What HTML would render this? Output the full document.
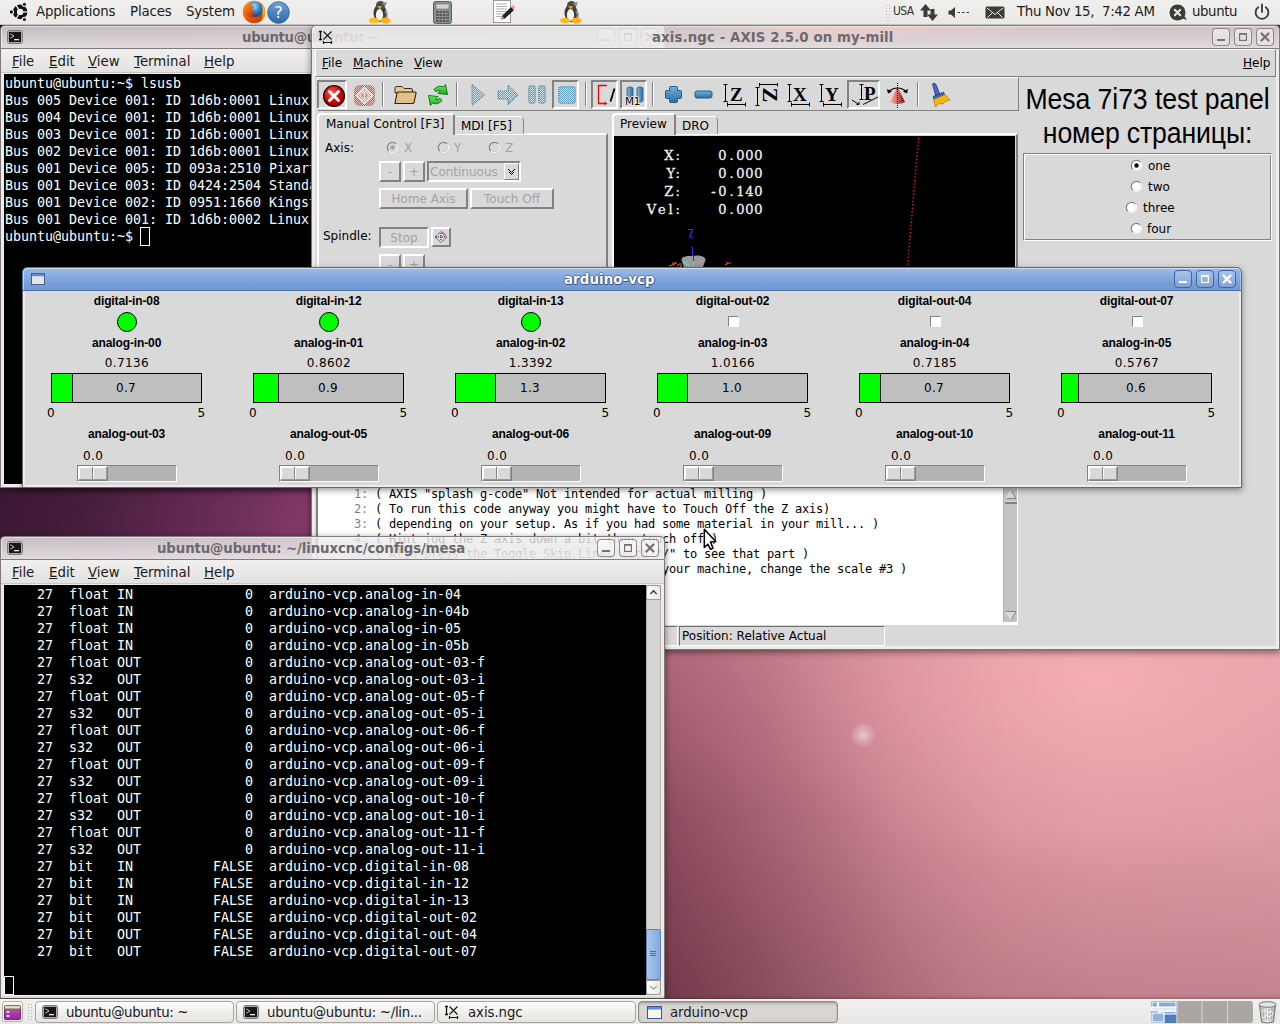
<!DOCTYPE html>
<html lang="en">
<head>
<meta charset="utf-8">
<title>arduino-vcp desktop</title>
<style>
*{box-sizing:border-box;margin:0;padding:0}
html,body{width:1280px;height:1024px;overflow:hidden;background:#3c1a35}
body{position:relative;font-family:"DejaVu Sans","Liberation Sans",sans-serif;font-size:13.333px;color:#000;line-height:15px;-webkit-font-smoothing:antialiased}
.a{position:absolute}
.t{position:absolute;white-space:pre;line-height:15px;height:15px}
.ui{font-family:"DejaVu Sans","Liberation Sans",sans-serif;font-size:13.333px;color:#1a1a1a}
.tk{font-family:"DejaVu Sans","Liberation Sans",sans-serif;font-size:12px;line-height:14px;height:14px}
.hb{font-family:"Liberation Sans","DejaVu Sans",sans-serif;font-weight:bold;font-size:12px;line-height:14px;height:14px;text-align:center}
.mono{font-family:"DejaVu Sans Mono","Liberation Mono",monospace;font-size:13.333px;line-height:17px;height:17px;color:#fff;letter-spacing:-0.025px}
.gc{font-family:"DejaVu Sans Mono","Liberation Mono",monospace;font-size:12px;line-height:15px;height:15px;color:#000;letter-spacing:-0.225px}
.dro{font-family:"DejaVu Serif","Liberation Serif",serif;font-weight:normal;font-size:13px;line-height:18px;height:18px;color:#f2f2f2;-webkit-text-stroke:0.3px #f2f2f2}
.dis{color:#a3a3a3}
u{text-decoration:underline;text-underline-offset:1px;text-decoration-thickness:1px}
#desk{left:0;top:0;width:1280px;height:1024px;
 background:
  radial-gradient(ellipse 900px 700px at 1150px 620px, #e9a5ad 0%, #dd98a5 20%, #c27b93 42%, #9c5278 62%, rgba(130,60,100,0) 100%),
  linear-gradient(100deg, #2f1229 0%, #471d3e 12%, #7b3564 26%, #8a4068 40%, #9a4f72 55%, #a85c7c 100%);
}
#desk2{left:664px;top:640px;width:616px;height:360px;
 background:
  radial-gradient(ellipse 13px 13px at 199px 95px, rgba(255,236,236,.6), rgba(255,236,236,0) 100%),
  radial-gradient(ellipse 300px 260px at 0px 360px, rgba(50,12,25,.18) 0%, rgba(50,12,25,0) 100%),
  radial-gradient(ellipse 330px 200px at 430px 40px, rgba(250,180,184,.70) 0%, rgba(250,180,184,.36) 45%, rgba(250,180,184,0) 100%),
  linear-gradient(180deg, rgba(248,170,182,.30) 0%, rgba(248,170,182,.14) 25%, rgba(248,170,182,0) 50%, rgba(50,12,25,0) 52%, rgba(50,12,25,.08) 75%, rgba(50,12,25,.17) 100%),
  linear-gradient(90deg, #924e63 0%, #b26d7c 22%, #c8828f 38%, #d7919c 55%, #dd98a3 71%, #dd9ba5 100%);
}
#desk3{left:0;top:0;width:1280px;height:64px;background:linear-gradient(180deg,rgba(90,40,70,0) 0px,rgba(90,40,70,0) 29px,rgba(90,40,70,.75) 40px,rgba(90,40,70,.9) 64px),linear-gradient(90deg,#2a1026 0%,#3f1a38 18%,#5a2850 40%,#70344e 52%,#7d3b4e 55%,#c8604f 61%,#f05c44 65%,#d0584a 69%,#ad4444 74%,#7a3348 86%,#5c2d44 100%)}
/* window chrome */
.win{position:absolute;border-radius:5px 5px 0 0;box-shadow:0 2px 7px rgba(0,0,0,.5)}
.tb{position:absolute;left:0;top:0;right:0;height:24px;border-radius:5px 5px 0 0;box-shadow:inset 1px 1px 0 rgba(255,255,255,.5),inset -1px 0 0 rgba(255,255,255,.35);border:1px solid rgba(110,105,108,.85);border-bottom-color:rgba(120,116,118,.9);
 background:linear-gradient(180deg,rgba(235,234,234,.79) 0%,rgba(235,234,234,.85) 50%,rgba(236,235,235,.92) 100%)}
.tb.act{border-color:#4a6ea8;background:linear-gradient(180deg,#9cbbe6 0%,#8aace0 35%,#7a9fd6 70%,#7198cf 100%)}
.tt{position:absolute;top:4px;white-space:pre;font-weight:bold;font-size:13.333px;line-height:15px;color:#6e686c}
.tb.act .tt{color:#fff;letter-spacing:0.1px;text-shadow:0 1px 0 rgba(45,75,135,.85),1px 0 0 rgba(45,75,135,.6),-1px 0 0 rgba(45,75,135,.6),0 -1px 0 rgba(45,75,135,.5),1px 1px 0 rgba(45,75,135,.5)}
.wb{position:absolute;top:2px;width:18px;height:18px;border-radius:4px;border:1px solid rgba(120,112,116,.8);background:linear-gradient(180deg,rgba(255,255,255,.55),rgba(255,255,255,.25))}
.tb.act .wb{border-color:#3f63a0;background:linear-gradient(180deg,#a9c4ea,#7fa3d8)}
.wb svg{position:absolute;left:0;top:0}
.body{position:absolute;left:0;right:0;top:24px;bottom:0;border:1px solid rgba(100,90,95,.8);border-top:0}
.mb{position:absolute;left:1px;right:1px;top:24px;height:24px;background:linear-gradient(180deg,#f1f0ef,#e3e2e0);border-bottom:1px solid #c9c7c4}
</style>
</head>
<body>
<div class="a" id="desk"></div>
<div class="a" id="desk2"></div>
<div class="a" id="desk3"></div>
<div class="win" id="term1" style="left:0px;top:25px;width:665px;height:463px">
<div class="tb"><svg class="a" style="left:6px;top:4px" width="16" height="14" viewBox="0 0 16 14"><rect x="0.5" y="0.5" width="15" height="13" rx="2" fill="#d6d4d4" stroke="#7e7a7d"/><rect x="1.8" y="1.8" width="12.4" height="10.4" rx="0.5" fill="#17171a"/><path d="M3.3 3.8 L7 6 L3.3 8.2" stroke="#c4c4c4" stroke-width="1" fill="none"/><rect x="7" y="9" width="5" height="1.3" fill="#e8e8e8"/></svg><span class="tt" style="left:241px;letter-spacing:-0.36px">ubuntu@ubuntu: ~</span><div class="wb" style="left:596px"><svg width="16" height="16" viewBox="0 0 16 16"><rect x="4" y="10" width="8" height="2" fill="#777074"/></svg></div><div class="wb" style="left:618px"><svg width="16" height="16" viewBox="0 0 16 16"><rect x="4.6" y="5" width="6.8" height="6.4" fill="none" stroke="#777074" stroke-width="1.2"/><rect x="4" y="4" width="8" height="1.6" fill="#777074"/></svg></div><div class="wb" style="left:640px"><svg width="16" height="16" viewBox="0 0 16 16"><path d="M4.5 4.5 L11.5 11.5 M11.5 4.5 L4.5 11.5" stroke="#777074" stroke-width="2.3" stroke-linecap="round"/></svg></div></div>
<div class="body" style="background:#edeceb"></div>
<div class="mb">
<span class="t ui" style="left:11px;top:5px"><u>F</u>ile</span>
<span class="t ui" style="left:48px;top:5px"><u>E</u>dit</span>
<span class="t ui" style="left:87px;top:5px"><u>V</u>iew</span>
<span class="t ui" style="left:133px;top:5px"><u>T</u>erminal</span>
<span class="t ui" style="left:203px;top:5px"><u>H</u>elp</span>
</div>
<div class="a" style="left:4px;top:49px;width:642px;height:410px;background:#000;overflow:hidden">
<span class="t mono" style="left:1px;top:1px">ubuntu@ubuntu:~$ lsusb</span>
<span class="t mono" style="left:1px;top:18px">Bus 005 Device 001: ID 1d6b:0001 Linux</span>
<span class="t mono" style="left:1px;top:35px">Bus 004 Device 001: ID 1d6b:0001 Linux</span>
<span class="t mono" style="left:1px;top:52px">Bus 003 Device 001: ID 1d6b:0001 Linux</span>
<span class="t mono" style="left:1px;top:69px">Bus 002 Device 001: ID 1d6b:0001 Linux</span>
<span class="t mono" style="left:1px;top:86px">Bus 001 Device 005: ID 093a:2510 Pixart</span>
<span class="t mono" style="left:1px;top:103px">Bus 001 Device 003: ID 0424:2504 Standard</span>
<span class="t mono" style="left:1px;top:120px">Bus 001 Device 002: ID 0951:1660 Kingston</span>
<span class="t mono" style="left:1px;top:137px">Bus 001 Device 001: ID 1d6b:0002 Linux</span>
<span class="t mono" style="left:1px;top:154px">ubuntu@ubuntu:~$ </span>
<div class="a" style="left:136px;top:153px;width:10px;height:19px;border:1px solid #fff"></div>
</div>
<div class="a" style="left:646px;top:49px;width:15px;height:410px;background:#d6d4d1;border-left:1px solid #b5b2ae;border-right:1px solid #b5b2ae"></div>
<div class="a" style="left:646px;top:49px;width:15px;height:15px;background:linear-gradient(90deg,#fdfdfd,#e9e8e6);border:1px solid #9d9a96;border-radius:3px 3px 0 0"><svg width="13" height="13" viewBox="0 0 13 13"><path d="M3.3 8 L6.5 4.8 L9.7 8" stroke="#3a3a3a" stroke-width="1.4" fill="none"/></svg></div>
<div class="a" style="left:646px;top:444px;width:15px;height:15px;background:linear-gradient(90deg,#fdfdfd,#e9e8e6);border:1px solid #9d9a96;border-radius:0 0 3px 3px"><svg width="13" height="13" viewBox="0 0 13 13"><path d="M3.3 5 L6.5 8.2 L9.7 5" stroke="#a5a29e" stroke-width="1.2" fill="none"/></svg></div>
</div>
<div class="win" id="axis" style="left:311px;top:25px;width:969px;height:625px">
<div class="a" style="left:0px;top:24px;width:969px;height:601px;background:#d9d9d9;border:1px solid rgba(100,90,95,.8);border-top:0;box-shadow:inset 3px 0 0 #eeebeb, inset -3px 0 0 #eeebeb, inset 0 -3px 0 #eeebeb"></div>
<div class="tb"><svg class="a" style="left:6px;top:3px" width="18" height="18" viewBox="0 0 18 18"><path d="M5.5 2.5 L13.5 10.5 M13.5 2.5 L5.5 10.5" stroke="#111" stroke-width="1.1" fill="none"/><path d="M2.5 2.5 V10.5 M1 2.5 H4 M1 10.5 H4" stroke="#111" stroke-width="1.3" fill="none"/><path d="M5.5 13.5 H13.5 M5.5 12 V15 M13.5 12 V15" stroke="#111" stroke-width="1.2" fill="none"/></svg><span class="tt" style="left:340px;letter-spacing:0.1px">axis.ngc - AXIS 2.5.0 on my-mill</span><div class="wb" style="left:900px"><svg width="16" height="16" viewBox="0 0 16 16"><rect x="4" y="10" width="8" height="2" fill="#777074"/></svg></div><div class="wb" style="left:922px"><svg width="16" height="16" viewBox="0 0 16 16"><rect x="4.6" y="5" width="6.8" height="6.4" fill="none" stroke="#777074" stroke-width="1.2"/><rect x="4" y="4" width="8" height="1.6" fill="#777074"/></svg></div><div class="wb" style="left:944px"><svg width="16" height="16" viewBox="0 0 16 16"><path d="M4.5 4.5 L11.5 11.5 M11.5 4.5 L4.5 11.5" stroke="#777074" stroke-width="2.3" stroke-linecap="round"/></svg></div></div>
<div class="a" style="left:4px;top:24px;width:961px;height:28px;background:#d9d9d9;border:1px solid;border-color:#fff #828282 #828282 #fff"></div>
<span class="t tk" style="left:11px;top:31px;"><u>F</u>ile</span>
<span class="t tk" style="left:42px;top:31px;"><u>M</u>achine</span>
<span class="t tk" style="left:103px;top:31px;"><u>V</u>iew</span>
<span class="t tk" style="left:932px;top:31px;"><u>H</u>elp</span>
<div class="a" style="left:6px;top:52px;width:702px;height:34px;border:1px solid;border-color:#fff #828282 #828282 #fff"></div>
<div class="a" style="left:6px;top:55px;width:30px;height:29px;border:2px solid;border-color:#828282 #fff #fff #828282"></div>
<svg class="a" style="left:11px;top:59px" width="24" height="24" viewBox="0 0 24 24"><defs><radialGradient id="er" cx="40%" cy="35%" r="70%"><stop offset="0" stop-color="#ff5a5a"/><stop offset="0.6" stop-color="#d40000"/><stop offset="1" stop-color="#8a0000"/></radialGradient></defs><circle cx="12" cy="12" r="10.5" fill="url(#er)" stroke="#1a0000" stroke-width="1.2"/><path d="M7.5 7.5 L16.5 16.5 M16.5 7.5 L7.5 16.5" stroke="#fff" stroke-width="3" stroke-linecap="round"/></svg>
<svg class="a" style="left:42px;top:59px" width="23" height="23" viewBox="0 0 23 23"><defs><pattern id="dr" width="2" height="2" patternUnits="userSpaceOnUse"><rect width="2" height="2" fill="#e3c4bc"/><rect width="1" height="1" fill="#cf5a3c"/><rect x="1" y="1" width="1" height="1" fill="#cf5a3c"/></pattern></defs><rect x="1" y="1" width="21" height="21" rx="5.5" fill="url(#dr)"/><path d="M11.5 3.5 L19.5 11.5 L11.5 19.5 L3.5 11.5 Z" fill="none" stroke="#f4ebe8" stroke-width="1.5"/><path d="M11.5 6.5 L16.5 11.5 L11.5 16.5 L6.5 11.5 Z" fill="none" stroke="#f4ebe8" stroke-width="1.3"/><path d="M11.5 8.5 V14.5" stroke="#f4ebe8" stroke-width="1.2"/></svg>
<div class="a" style="left:71px;top:57px;width:2px;height:24px;border-left:1px solid #828282;border-right:1px solid #fff"></div>
<svg class="a" style="left:83px;top:60px" width="23" height="20" viewBox="0 0 23 20"><path d="M1 3 Q1 1.5 2.5 1.5 H8 L10 3.5 H17 Q18.5 3.5 18.5 5 V8 H1 Z" fill="#e9c98f" stroke="#3a2f1a" stroke-width="1"/><path d="M1 18.5 L3 8 Q3.3 7 4.5 7 H21 Q22.3 7 22 8.3 L20 17.5 Q19.7 18.5 18.5 18.5 Z" fill="#e3c088" stroke="#2e2514" stroke-width="1.1"/></svg>
<svg class="a" style="left:115px;top:58px" width="24" height="24" viewBox="0 0 24 24"><defs><linearGradient id="rg" x1="0" y1="0" x2="0" y2="1"><stop offset="0" stop-color="#5cf05c"/><stop offset="1" stop-color="#16b016"/></linearGradient></defs><path d="M8 6.5 Q12.5 1.5 17.5 4 L19.5 1.5 L21.5 11.5 L12 10.5 L14.3 7.8 Q12 6.5 10 8.8 Z" fill="url(#rg)" stroke="#0a6a0a" stroke-width="0.9" stroke-linejoin="round"/><path d="M16 17.5 Q11.5 22.5 6.5 20 L4.5 22.5 L2.5 12.5 L12 13.5 L9.7 16.2 Q12 17.5 14 15.2 Z" fill="url(#rg)" stroke="#0a6a0a" stroke-width="0.9" stroke-linejoin="round"/></svg>
<div class="a" style="left:145px;top:57px;width:2px;height:24px;border-left:1px solid #828282;border-right:1px solid #fff"></div>
<svg class="a" style="left:160px;top:59px" width="14" height="22" viewBox="0 0 14 22"><defs><pattern id="db" width="2" height="2" patternUnits="userSpaceOnUse"><rect width="2" height="2" fill="#cfdde4"/><rect width="1" height="1" fill="#62a0c4"/><rect x="1" y="1" width="1" height="1" fill="#62a0c4"/></pattern></defs><path d="M1 0.5 L13.5 11 L1 21.5 Z" fill="url(#db)" stroke="#2f6f98" stroke-width="1" stroke-dasharray="1 1"/></svg>
<svg class="a" style="left:186px;top:59px" width="22" height="22" viewBox="0 0 22 22"><path d="M1 7 H11 V1 L21 11 L11 21 V15 H1 Z" fill="url(#db)" stroke="#2f6f98" stroke-width="1" stroke-dasharray="1 1"/></svg>
<svg class="a" style="left:217px;top:60px" width="19" height="19" viewBox="0 0 19 19"><rect x="0.8" y="0.8" width="6.4" height="17.4" rx="1.5" fill="url(#db)" stroke="#2f6f98" stroke-width="1" stroke-dasharray="1 1"/><rect x="10.8" y="0.8" width="6.4" height="17.4" rx="1.5" fill="url(#db)" stroke="#2f6f98" stroke-width="1" stroke-dasharray="1 1"/></svg>
<div class="a" style="left:241px;top:55px;width:27px;height:29px;border:2px solid;border-color:#828282 #fff #fff #828282"></div>
<svg class="a" style="left:247px;top:61px" width="18" height="18" viewBox="0 0 18 18"><rect x="0.8" y="0.8" width="16.4" height="16.4" rx="1.5" fill="url(#db)" stroke="#2f6f98" stroke-width="1" stroke-dasharray="1 1"/></svg>
<div class="a" style="left:274px;top:57px;width:2px;height:24px;border-left:1px solid #828282;border-right:1px solid #fff"></div>
<div class="a" style="left:280px;top:55px;width:27px;height:29px;border:2px solid;border-color:#828282 #fff #fff #828282"></div>
<svg class="a" style="left:285px;top:59px" width="20" height="22" viewBox="0 0 20 22"><path d="M11 1.5 H2.5 V19.5 H10" fill="none" stroke="#f00" stroke-width="1.3"/><path d="M8.5 17.5 L11.5 19.5 L8.5 21.5 Z" fill="#f00"/><path d="M18.5 4.5 L14.5 17.5" stroke="#000" stroke-width="1.8"/></svg>
<div class="a" style="left:309px;top:55px;width:27px;height:29px;border:2px solid;border-color:#828282 #fff #fff #828282"></div>
<svg class="a" style="left:314px;top:61px" width="20" height="20" viewBox="0 0 20 20"><defs><linearGradient id="pb" x1="0" x2="1"><stop offset="0" stop-color="#7fb3d6"/><stop offset="1" stop-color="#2f6f9f"/></linearGradient></defs><rect x="2" y="1" width="6" height="15" rx="2" fill="url(#pb)" stroke="#2a5f88" stroke-width="0.8"/><rect x="12" y="1" width="6" height="15" rx="2" fill="url(#pb)" stroke="#2a5f88" stroke-width="0.8"/></svg>
<span class="t" style="left:314px;top:71px;font-family:DejaVu Sans,sans-serif;font-size:10.5px;line-height:11px;height:11px;color:#000;letter-spacing:-0.2px;text-shadow:1px 0 0 #f0f0f0,-1px 0 0 #f0f0f0,0 -1px 0 #f0f0f0,0 1px 0 #f0f0f0">M1</span>
<div class="a" style="left:341px;top:57px;width:2px;height:24px;border-left:1px solid #828282;border-right:1px solid #fff"></div>
<svg class="a" style="left:353px;top:60px" width="19" height="19" viewBox="0 0 19 19"><defs><linearGradient id="pl" x1="0" y1="0" x2="0" y2="1"><stop offset="0" stop-color="#6fb0dd"/><stop offset="1" stop-color="#2b6fa3"/></linearGradient></defs><path d="M6.5 1.5 H12.5 Q13.5 1.5 13.5 2.5 V5.5 H16.5 Q17.5 5.5 17.5 6.5 V12.5 Q17.5 13.5 16.5 13.5 H13.5 V16.5 Q13.5 17.5 12.5 17.5 H6.5 Q5.5 17.5 5.5 16.5 V13.5 H2.5 Q1.5 13.5 1.5 12.5 V6.5 Q1.5 5.5 2.5 5.5 H5.5 V2.5 Q5.5 1.5 6.5 1.5 Z" fill="url(#pl)" stroke="#245d8c" stroke-width="1"/></svg>
<svg class="a" style="left:383px;top:65px" width="19" height="9" viewBox="0 0 19 9"><rect x="1" y="1" width="17" height="7" rx="2" fill="url(#pl)" stroke="#245d8c" stroke-width="1"/></svg>
<svg class="a" style="left:412px;top:58px" width="24" height="24" viewBox="0 0 24 24"><path d="M2.5 1.5 V18.5 M0.5 1.5 H4.5 M0.5 18.5 H4.5 M4.5 21.5 H22.5 M4.5 19.5 V23.5 M22.5 19.5 V23.5" stroke="#000" stroke-width="1" fill="none"/><text x="7" y="17.5" font-family="Liberation Serif,DejaVu Serif,serif" font-weight="bold" font-size="19" fill="#000">Z</text></svg>
<svg class="a" style="left:444px;top:58px" width="24" height="24" viewBox="0 0 24 24"><path d="M2.5 4.5 V22.5 M0.5 4.5 H4.5 M0.5 22.5 H4.5 M4.5 1.5 H22.5 M4.5 -0.5 V3.5 M22.5 -0.5 V3.5" stroke="#000" stroke-width="1" fill="none"/><text x="0" y="0" transform="translate(7.5,4.5) rotate(90) scale(1.18,1.05)" font-family="Liberation Serif,DejaVu Serif,serif" font-weight="bold" font-size="19" fill="#000">Z</text></svg>
<svg class="a" style="left:476px;top:58px" width="24" height="24" viewBox="0 0 24 24"><path d="M2.5 1.5 V18.5 M0.5 1.5 H4.5 M0.5 18.5 H4.5 M4.5 21.5 H22.5 M4.5 19.5 V23.5 M22.5 19.5 V23.5" stroke="#000" stroke-width="1" fill="none"/><text x="6" y="17.5" font-family="Liberation Serif,DejaVu Serif,serif" font-weight="bold" font-size="19" fill="#000">X</text></svg>
<svg class="a" style="left:508px;top:58px" width="24" height="24" viewBox="0 0 24 24"><path d="M2.5 1.5 V18.5 M0.5 1.5 H4.5 M0.5 18.5 H4.5 M4.5 21.5 H22.5 M4.5 19.5 V23.5 M22.5 19.5 V23.5" stroke="#000" stroke-width="1" fill="none"/><text x="6" y="17.5" font-family="Liberation Serif,DejaVu Serif,serif" font-weight="bold" font-size="19" fill="#000">Y</text></svg>
<div class="a" style="left:536px;top:55px;width:33px;height:29px;border:2px solid;border-color:#828282 #fff #fff #828282"></div>
<svg class="a" style="left:540px;top:58px" width="28" height="24" viewBox="0 0 28 24"><path d="M10.5 1.5 V16.5 M8.5 1.5 H12.5 M8.5 16.5 H12.5 M1 17 L8 21.5 M8 21.5 L8 19 M8 21.5 L5.5 21.5 M12 21.5 L27 14" stroke="#000" stroke-width="1" fill="none"/><text x="13" y="17" font-family="Liberation Serif,DejaVu Serif,serif" font-weight="bold" font-size="19" fill="#000">P</text></svg>
<svg class="a" style="left:575px;top:58px" width="23" height="25" viewBox="0 0 23 25"><defs><linearGradient id="cn" x1="0" x2="1"><stop offset="0" stop-color="#f7b0a8"/><stop offset="0.5" stop-color="#e0655a"/><stop offset="1" stop-color="#5a1510"/></linearGradient></defs><path d="M11.5 4 L19 19 Q11.5 23 4 19 Z" fill="url(#cn)"/><path d="M11.5 0 V25" stroke="#000" stroke-width="1" stroke-dasharray="1 1"/><path d="M2 9 Q11.5 1 21 9" stroke="#000" stroke-width="1.2" fill="none"/><path d="M1 6 L2 10.5 L6 8.5 Z M22 6 L21 10.5 L17 8.5 Z" fill="#000"/></svg>
<div class="a" style="left:606px;top:57px;width:2px;height:24px;border-left:1px solid #828282;border-right:1px solid #fff"></div>
<svg class="a" style="left:618px;top:57px" width="22" height="26" viewBox="0 0 22 26"><path d="M3.5 2 Q5.5 0.5 7 2.5 L11 13 L7 15 Z" fill="#4a67c8" stroke="#1e2f7a" stroke-width="0.8"/><path d="M4 14.5 L14.5 10 L16 13 L5 18 Z" fill="#3f5fc0" stroke="#1e2f7a" stroke-width="0.6"/><path d="M4.5 17.5 L16 12.5 L21 18 L16.5 19 L14 22 L10 21.5 L6.5 25 Z" fill="#f5b90a" stroke="#a67400" stroke-width="0.7"/></svg>
<div class="a" style="left:6px;top:108px;width:291px;height:520px;background:#d9d9d9;border:2px solid;border-color:#fff #828282 #828282 #fff"></div>
<div class="a" style="left:144px;top:91px;width:69px;height:18px;background:#d9d9d9;border:1px solid;border-color:#fff #8a8a8a #d9d9d9 #d9d9d9;border-bottom:0;border-radius:0 5px 0 0;"></div>
<span class="t tk" style="left:150px;top:94px;">MDI [F5]</span>
<div class="a" style="left:6px;top:88px;width:138px;height:22px;background:#d9d9d9;border:2px solid;border-color:#fff #828282 #d9d9d9 #fff;border-bottom:0;border-radius:4px 4px 0 0;"></div>
<span class="t tk" style="left:15px;top:92px;">Manual Control [F3]</span>
<span class="t tk" style="left:14px;top:116px;">Axis:</span>
<svg class="a" style="left:74.5px;top:115.5px" width="13" height="13" viewBox="0 0 13 13"><circle cx="6.5" cy="6.5" r="5.2" fill="#d9d9d9" stroke="#828282" stroke-width="1.2"/><path d="M2.8 10.2 A5.2 5.2 0 0 0 10.2 2.8" fill="none" stroke="#fff" stroke-width="1.2"/><circle cx="6.5" cy="6.5" r="2.2" fill="#a3a3a3"/></svg>
<span class="t tk dis" style="left:93px;top:116px;">X</span>
<svg class="a" style="left:125.5px;top:115.5px" width="13" height="13" viewBox="0 0 13 13"><circle cx="6.5" cy="6.5" r="5.2" fill="#d9d9d9" stroke="#828282" stroke-width="1.2"/><path d="M2.8 10.2 A5.2 5.2 0 0 0 10.2 2.8" fill="none" stroke="#fff" stroke-width="1.2"/></svg>
<span class="t tk dis" style="left:143px;top:116px;">Y</span>
<svg class="a" style="left:176.5px;top:115.5px" width="13" height="13" viewBox="0 0 13 13"><circle cx="6.5" cy="6.5" r="5.2" fill="#d9d9d9" stroke="#828282" stroke-width="1.2"/><path d="M2.8 10.2 A5.2 5.2 0 0 0 10.2 2.8" fill="none" stroke="#fff" stroke-width="1.2"/></svg>
<span class="t tk dis" style="left:194px;top:116px;">Z</span>
<div class="a" style="left:68px;top:136px;width:22px;height:21px;border:2px solid;border-color:#ffffff #828282 #828282 #ffffff;background:#d9d9d9;text-align:center;line-height:18px;font-size:12px;color:#a3a3a3;white-space:pre">-</div>
<div class="a" style="left:92px;top:136px;width:22px;height:21px;border:2px solid;border-color:#ffffff #828282 #828282 #ffffff;background:#d9d9d9;text-align:center;line-height:18px;font-size:12px;color:#a3a3a3;white-space:pre">+</div>
<div class="a" style="left:116px;top:136px;width:94px;height:21px;border:2px solid;border-color:#828282 #ffffff #ffffff #828282;background:#d9d9d9"></div>
<span class="t tk dis" style="left:119px;top:140px;">Continuous</span>
<div class="a" style="left:193px;top:138px;width:15px;height:17px;border:1px solid;border-color:#ffffff #828282 #828282 #ffffff;background:#d9d9d9"><svg width="13" height="15" viewBox="0 0 13 15"><path d="M3 5 L6.5 8.5 L10 5 M4 8 L6.5 10.5 L9 8" stroke="#000" stroke-width="1" fill="none"/></svg></div>
<div class="a" style="left:68px;top:163px;width:89px;height:21px;border:2px solid;border-color:#ffffff #828282 #828282 #ffffff;background:#d9d9d9;text-align:center;line-height:18px;font-size:12px;color:#a3a3a3;white-space:pre">Home Axis</div>
<div class="a" style="left:159px;top:163px;width:84px;height:21px;border:2px solid;border-color:#ffffff #828282 #828282 #ffffff;background:#d9d9d9;text-align:center;line-height:18px;font-size:12px;color:#a3a3a3;white-space:pre">Touch Off</div>
<span class="t tk" style="left:12px;top:204px;">Spindle:</span>
<div class="a" style="left:68px;top:202px;width:50px;height:21px;border:2px solid;border-color:#828282 #ffffff #ffffff #828282;background:#d9d9d9;text-align:center;line-height:18px;font-size:12px;color:#a3a3a3;white-space:pre">Stop</div>
<div class="a" style="left:120px;top:202px;width:20px;height:20px;border:2px solid;border-color:#ffffff #828282 #828282 #ffffff;background:#d9d9d9"><svg width="16" height="16" viewBox="0 0 16 16"><path d="M2 8 L8 2.5 L14 8 L8 13.5 Z M3 8 H13 M8 4 V12" stroke="#000" stroke-width="0.9" fill="none" stroke-dasharray="1 1"/><path d="M9 3 L13 7" stroke="#c050c0" stroke-width="1.5"/></svg></div>
<div class="a" style="left:68px;top:229px;width:22px;height:21px;border:2px solid;border-color:#ffffff #828282 #828282 #ffffff;background:#d9d9d9;text-align:center;line-height:18px;font-size:12px;color:#a3a3a3;white-space:pre">-</div>
<div class="a" style="left:92px;top:229px;width:22px;height:21px;border:2px solid;border-color:#ffffff #828282 #828282 #ffffff;background:#d9d9d9;text-align:center;line-height:18px;font-size:12px;color:#a3a3a3;white-space:pre">+</div>
<div class="a" style="left:301px;top:108px;width:406px;height:140px;background:#d9d9d9;border:2px solid;border-color:#fff #828282 #828282 #fff"></div>
<div class="a" style="left:365px;top:91px;width:42px;height:18px;background:#d9d9d9;border:1px solid;border-color:#fff #8a8a8a #d9d9d9 #d9d9d9;border-bottom:0;border-radius:0 5px 0 0;"></div>
<span class="t tk" style="left:371px;top:94px;">DRO</span>
<div class="a" style="left:301px;top:88px;width:64px;height:22px;background:#d9d9d9;border:2px solid;border-color:#fff #828282 #d9d9d9 #fff;border-bottom:0;border-radius:4px 4px 0 0;"></div>
<span class="t tk" style="left:309px;top:92px;">Preview</span>
<div class="a" style="left:303px;top:111px;width:401px;height:140px;background:#000;overflow:hidden"><svg class="a" style="left:0;top:0" width="401" height="140" viewBox="614 136 401 140"><path d="M918.5 138 L907.3 268" stroke="#ff1010" stroke-width="1.6" stroke-dasharray="1.2 2.3" fill="none"/><path d="M681.5 260 Q681 256.5 688 256 L699 255.5 Q706 256.5 705.5 260 L703 267 H684 Z" fill="#9c9c9c"/><path d="M691.5 246.5 L692.5 248 V256" stroke="#2a2aff" stroke-width="1.1" fill="none"/><path d="M693.5 256 V261" stroke="#3535ff" stroke-width="1.2"/><path d="M693.5 261 V267" stroke="#a8a8e8" stroke-width="1.2"/><path d="M688 229.5 H692.5 L689.5 237 H692 L693 238.5" stroke="#3030ff" stroke-width="1.1" fill="none"/><path d="M669 266 L676 263.5 M672 263 H677 M677 266 L679 264 H682 M680 267 L682 265 M725 265 L728 263.5 L731 262.5 M726 262 L728 263.5" stroke="#f06060" stroke-width="1" fill="none"/><path d="M683 263 L688 262 M685 262 L687 266 M686 265 L690 264 M688 266 L691 267" stroke="#70d8d0" stroke-width="1" fill="none"/></svg></div>
<span class="t dro" style="left:251.20000000000005px;top:122px;width:120px;text-align:right;letter-spacing:2.2px">X:</span>
<span class="t dro" style="left:332.33000000000004px;top:122px;width:120px;text-align:right;letter-spacing:0.73px">0<span style="padding:0 2.05px">.</span>000</span>
<span class="t dro" style="left:251.20000000000005px;top:140px;width:120px;text-align:right;letter-spacing:2.2px">Y:</span>
<span class="t dro" style="left:332.33000000000004px;top:140px;width:120px;text-align:right;letter-spacing:0.73px">0<span style="padding:0 2.05px">.</span>000</span>
<span class="t dro" style="left:251.20000000000005px;top:158px;width:120px;text-align:right;letter-spacing:2.2px">Z:</span>
<span class="t dro" style="left:332.33000000000004px;top:158px;width:120px;text-align:right;letter-spacing:0.73px"><span style="padding:0 1.9px">-</span>0<span style="padding:0 2.05px">.</span>140</span>
<span class="t dro" style="left:251.89999999999998px;top:176px;width:120px;text-align:right;letter-spacing:2.9px">Vel:</span>
<span class="t dro" style="left:332.33000000000004px;top:176px;width:120px;text-align:right;letter-spacing:0.73px">0<span style="padding:0 2.05px">.</span>000</span>
<span class="t" style="left:701.5px;top:56.900000000000006px;width:270px;text-align:center;font-family:Liberation Sans,sans-serif;font-size:26.667px;line-height:32px;height:32px;letter-spacing:-0.1px;transform:scaleY(1.075);transform-origin:50% 0">Mesa 7i73 test panel</span>
<span class="t" style="left:701.5px;top:90.7px;width:270px;text-align:center;font-family:Liberation Sans,sans-serif;font-size:26.667px;line-height:32px;height:32px;letter-spacing:-0.15px;transform:scaleY(1.075);transform-origin:50% 0">номер страницы:</span>
<div class="a" style="left:712px;top:128px;width:249px;height:88px;border:1px solid;border-color:#828282 #fff #fff #828282;box-shadow:inset 1px 1px 0 #fff, inset -1px -1px 0 #828282"></div>
<svg class="a" style="left:819.0px;top:133.5px" width="13" height="13" viewBox="0 0 13 13"><circle cx="6.5" cy="6.5" r="5.2" fill="#fff" stroke="#828282" stroke-width="1.2"/><path d="M2.8 10.2 A5.2 5.2 0 0 0 10.2 2.8" fill="none" stroke="#fff" stroke-width="1.2"/><circle cx="6.5" cy="6.5" r="2.2" fill="#000"/></svg>
<span class="t tk" style="left:837px;top:134px;">one</span>
<svg class="a" style="left:819.0px;top:154.5px" width="13" height="13" viewBox="0 0 13 13"><circle cx="6.5" cy="6.5" r="5.2" fill="#fff" stroke="#828282" stroke-width="1.2"/><path d="M2.8 10.2 A5.2 5.2 0 0 0 10.2 2.8" fill="none" stroke="#fff" stroke-width="1.2"/></svg>
<span class="t tk" style="left:837px;top:155px;">two</span>
<svg class="a" style="left:814.0px;top:175.5px" width="13" height="13" viewBox="0 0 13 13"><circle cx="6.5" cy="6.5" r="5.2" fill="#fff" stroke="#828282" stroke-width="1.2"/><path d="M2.8 10.2 A5.2 5.2 0 0 0 10.2 2.8" fill="none" stroke="#fff" stroke-width="1.2"/></svg>
<span class="t tk" style="left:832px;top:176px;">three</span>
<svg class="a" style="left:818.5px;top:196.5px" width="13" height="13" viewBox="0 0 13 13"><circle cx="6.5" cy="6.5" r="5.2" fill="#fff" stroke="#828282" stroke-width="1.2"/><path d="M2.8 10.2 A5.2 5.2 0 0 0 10.2 2.8" fill="none" stroke="#fff" stroke-width="1.2"/></svg>
<span class="t tk" style="left:836px;top:197px;">four</span>
<div class="a" style="left:5px;top:275px;width:702px;height:325px;background:#fff;border:2px solid;border-color:#828282 #fff #fff #828282"></div>
<div class="a" style="left:692px;top:462px;width:14px;height:135px;background:#c3c3c3;border-left:1px solid #b0b0b0"><svg class="a" style="left:1px;top:2px" width="12" height="12" viewBox="0 0 12 12"><path d="M6 1 L11 9.5 H1 Z" fill="#d9d9d9" stroke="#828282" stroke-width="1"/><path d="M1 9.5 L6 1" stroke="#fff" stroke-width="1"/></svg><div class="a" style="left:1px;top:14px;width:12px;height:3px;border-bottom:2px solid #828282;background:#d9d9d9"></div><svg class="a" style="left:1px;bottom:1px" width="12" height="12" viewBox="0 0 12 12"><path d="M6 11 L11 2.5 H1 Z" fill="#d9d9d9" stroke="#828282" stroke-width="1"/><path d="M1 2.5 L6 11" stroke="#fff" stroke-width="1"/></svg></div>
<span class="t gc" style="left:15px;top:462px;"><span style="color:#808080">    1: </span>( AXIS "splash g-code" Not intended for actual milling )</span>
<span class="t gc" style="left:15px;top:477px;"><span style="color:#808080">    2: </span>( To run this code anyway you might have to Touch Off the Z axis)</span>
<span class="t gc" style="left:15px;top:492px;"><span style="color:#808080">    3: </span>( depending on your setup. As if you had some material in your mill... )</span>
<span class="t gc" style="left:15px;top:507px;"><span style="color:#808080">    4: </span>( Hint jog the Z axis down a bit then touch off )</span>
<span class="t gc" style="left:15px;top:522px;"><span style="color:#808080">    5: </span>( Also press the Toggle Skip Lines with "/" to see that part )</span>
<span class="t gc" style="left:351px;top:537px;">your machine, change the scale #3 )</span>
<div class="a" style="left:6px;top:601px;width:361px;height:20px;border:1px solid;border-color:#707070 #ffffff #ffffff #707070;background:#d9d9d9"></div>
<div class="a" style="left:368px;top:601px;width:206px;height:20px;border:1px solid;border-color:#707070 #ffffff #ffffff #707070;background:#d9d9d9"></div>
<span class="t tk" style="left:371px;top:604px;">Position: Relative Actual</span>
</div>
<div class="win" id="term2" style="left:0px;top:536px;width:665px;height:463px">
<div class="tb"><svg class="a" style="left:6px;top:4px" width="16" height="14" viewBox="0 0 16 14"><rect x="0.5" y="0.5" width="15" height="13" rx="2" fill="#d6d4d4" stroke="#7e7a7d"/><rect x="1.8" y="1.8" width="12.4" height="10.4" rx="0.5" fill="#17171a"/><path d="M3.3 3.8 L7 6 L3.3 8.2" stroke="#c4c4c4" stroke-width="1" fill="none"/><rect x="7" y="9" width="5" height="1.3" fill="#e8e8e8"/></svg><span class="tt" style="left:156px;letter-spacing:-0.13px">ubuntu@ubuntu: ~/linuxcnc/configs/mesa</span><div class="wb" style="left:596px"><svg width="16" height="16" viewBox="0 0 16 16"><rect x="4" y="10" width="8" height="2" fill="#777074"/></svg></div><div class="wb" style="left:618px"><svg width="16" height="16" viewBox="0 0 16 16"><rect x="4.6" y="5" width="6.8" height="6.4" fill="none" stroke="#777074" stroke-width="1.2"/><rect x="4" y="4" width="8" height="1.6" fill="#777074"/></svg></div><div class="wb" style="left:640px"><svg width="16" height="16" viewBox="0 0 16 16"><path d="M4.5 4.5 L11.5 11.5 M11.5 4.5 L4.5 11.5" stroke="#777074" stroke-width="2.3" stroke-linecap="round"/></svg></div></div>
<div class="body" style="background:#edeceb"></div>
<div class="mb">
<span class="t ui" style="left:11px;top:5px"><u>F</u>ile</span>
<span class="t ui" style="left:48px;top:5px"><u>E</u>dit</span>
<span class="t ui" style="left:87px;top:5px"><u>V</u>iew</span>
<span class="t ui" style="left:133px;top:5px"><u>T</u>erminal</span>
<span class="t ui" style="left:203px;top:5px"><u>H</u>elp</span>
</div>
<div class="a" style="left:4px;top:49px;width:642px;height:410px;background:#000;overflow:hidden">
<span class="t mono" style="left:1px;top:1px">    27  float IN              0  arduino-vcp.analog-in-04</span>
<span class="t mono" style="left:1px;top:18px">    27  float IN              0  arduino-vcp.analog-in-04b</span>
<span class="t mono" style="left:1px;top:35px">    27  float IN              0  arduino-vcp.analog-in-05</span>
<span class="t mono" style="left:1px;top:52px">    27  float IN              0  arduino-vcp.analog-in-05b</span>
<span class="t mono" style="left:1px;top:69px">    27  float OUT             0  arduino-vcp.analog-out-03-f</span>
<span class="t mono" style="left:1px;top:86px">    27  s32   OUT             0  arduino-vcp.analog-out-03-i</span>
<span class="t mono" style="left:1px;top:103px">    27  float OUT             0  arduino-vcp.analog-out-05-f</span>
<span class="t mono" style="left:1px;top:120px">    27  s32   OUT             0  arduino-vcp.analog-out-05-i</span>
<span class="t mono" style="left:1px;top:137px">    27  float OUT             0  arduino-vcp.analog-out-06-f</span>
<span class="t mono" style="left:1px;top:154px">    27  s32   OUT             0  arduino-vcp.analog-out-06-i</span>
<span class="t mono" style="left:1px;top:171px">    27  float OUT             0  arduino-vcp.analog-out-09-f</span>
<span class="t mono" style="left:1px;top:188px">    27  s32   OUT             0  arduino-vcp.analog-out-09-i</span>
<span class="t mono" style="left:1px;top:205px">    27  float OUT             0  arduino-vcp.analog-out-10-f</span>
<span class="t mono" style="left:1px;top:222px">    27  s32   OUT             0  arduino-vcp.analog-out-10-i</span>
<span class="t mono" style="left:1px;top:239px">    27  float OUT             0  arduino-vcp.analog-out-11-f</span>
<span class="t mono" style="left:1px;top:256px">    27  s32   OUT             0  arduino-vcp.analog-out-11-i</span>
<span class="t mono" style="left:1px;top:273px">    27  bit   IN          FALSE  arduino-vcp.digital-in-08</span>
<span class="t mono" style="left:1px;top:290px">    27  bit   IN          FALSE  arduino-vcp.digital-in-12</span>
<span class="t mono" style="left:1px;top:307px">    27  bit   IN          FALSE  arduino-vcp.digital-in-13</span>
<span class="t mono" style="left:1px;top:324px">    27  bit   OUT         FALSE  arduino-vcp.digital-out-02</span>
<span class="t mono" style="left:1px;top:341px">    27  bit   OUT         FALSE  arduino-vcp.digital-out-04</span>
<span class="t mono" style="left:1px;top:358px">    27  bit   OUT         FALSE  arduino-vcp.digital-out-07</span>
<div class="a" style="left:0px;top:391px;width:10px;height:19px;border:1px solid #fff"></div>
</div>
<div class="a" style="left:646px;top:49px;width:15px;height:410px;background:#d6d4d1;border-left:1px solid #b5b2ae;border-right:1px solid #b5b2ae"></div>
<div class="a" style="left:646px;top:49px;width:15px;height:15px;background:linear-gradient(90deg,#fdfdfd,#e9e8e6);border:1px solid #9d9a96;border-radius:3px 3px 0 0"><svg width="13" height="13" viewBox="0 0 13 13"><path d="M3.3 8 L6.5 4.8 L9.7 8" stroke="#3a3a3a" stroke-width="1.4" fill="none"/></svg></div>
<div class="a" style="left:646px;top:444px;width:15px;height:15px;background:linear-gradient(90deg,#fdfdfd,#e9e8e6);border:1px solid #9d9a96;border-radius:0 0 3px 3px"><svg width="13" height="13" viewBox="0 0 13 13"><path d="M3.3 5 L6.5 8.2 L9.7 5" stroke="#a5a29e" stroke-width="1.2" fill="none"/></svg></div>
<div class="a" style="left:646px;top:393px;width:15px;height:51px;background:linear-gradient(90deg,#a9c5ec,#86a9dc);border:1px solid #5f83bb;border-radius:2px"><div class="a" style="left:3px;top:21px;width:6px;height:1px;background:#4a6ea8;box-shadow:0 2px 0 #4a6ea8,0 4px 0 #4a6ea8"></div></div>
</div>
<div class="win" id="vcp" style="left:22px;top:267px;width:1220px;height:221px;box-shadow:0 2px 6px rgba(0,0,0,.42)">
<div class="a" style="left:0px;top:24px;width:1220px;height:197px;background:#d9d9d9;border:1px solid rgba(85,80,85,.85);border-top:0;box-shadow:inset 2px 0 0 #eeebeb, inset -2px 0 0 #eeebeb, inset 0 -2px 0 #eeebeb"></div>
<div class="tb act"><svg class="a" style="left:8px;top:5px" width="14" height="12" viewBox="0 0 15 13"><rect x="0.5" y="0.5" width="14" height="12" fill="#e6e6e6" stroke="#3b5a8c"/><rect x="1" y="1" width="13" height="2.5" fill="#5d8fd0"/></svg><span class="tt" style="left:541px">arduino-vcp</span><div class="wb" style="left:1151px"><svg width="16" height="16" viewBox="0 0 16 16"><rect x="4" y="10" width="8" height="2" fill="#fff"/></svg></div><div class="wb" style="left:1173px"><svg width="16" height="16" viewBox="0 0 16 16"><rect x="4.6" y="5" width="6.8" height="6.4" fill="none" stroke="#fff" stroke-width="1.2"/><rect x="4" y="4" width="8" height="1.6" fill="#fff"/></svg></div><div class="wb" style="left:1195px"><svg width="16" height="16" viewBox="0 0 16 16"><path d="M4.5 4.5 L11.5 11.5 M11.5 4.5 L4.5 11.5" stroke="#fff" stroke-width="2.3" stroke-linecap="round"/></svg></div></div>
<span class="t hb" style="left:24.599999999999994px;top:27px;width:160px;text-align:center;letter-spacing:-0.12px">digital-in-08</span>
<svg class="a" style="left:94px;top:44px" width="22" height="22" viewBox="0 0 22 22"><circle cx="11" cy="11" r="9.5" fill="#00ff00" stroke="#000" stroke-width="1"/></svg>
<span class="t hb" style="left:24.599999999999994px;top:69px;width:160px;text-align:center;letter-spacing:-0.12px">analog-in-00</span>
<span class="t tk" style="left:24.799999999999997px;top:89px;width:160px;text-align:center;letter-spacing:0.37px">0.7136</span>
<div class="a" style="left:29px;top:106px;width:151px;height:30px;background:#bfbfbf;border:1px solid #000"><div class="a" style="left:0;top:0;width:21px;height:28px;background:#00ff00;border-right:1px solid #000"></div></div>
<span class="t tk" style="left:54.0px;top:114px;width:100px;text-align:center;letter-spacing:0.37px">0.7</span>
<span class="t tk" style="left:25px;top:139px;">0</span>
<span class="t tk" style="left:175.5px;top:139px;">5</span>
<span class="t hb" style="left:24.599999999999994px;top:160px;width:160px;text-align:center;letter-spacing:-0.12px">analog-out-03</span>
<span class="t tk" style="left:61px;top:182px;letter-spacing:0.37px">0.0</span>
<div class="a" style="left:55px;top:198px;width:100px;height:17px;background:#b3b3b3;border:1px solid;border-color:#828282 #fff #fff #828282"><div class="a" style="left:0;top:0;width:30px;height:15px;background:#d9d9d9;border:1px solid;border-color:#fff #828282 #828282 #fff;box-shadow:inset -1px -1px 0 #9a9a9a,inset 1px 1px 0 #fff"><div class="a" style="left:13px;top:0;width:2px;height:12px;border-left:1px solid #828282;border-right:1px solid #fff"></div></div></div>
<span class="t hb" style="left:226.60000000000002px;top:27px;width:160px;text-align:center;letter-spacing:-0.12px">digital-in-12</span>
<svg class="a" style="left:296px;top:44px" width="22" height="22" viewBox="0 0 22 22"><circle cx="11" cy="11" r="9.5" fill="#00ff00" stroke="#000" stroke-width="1"/></svg>
<span class="t hb" style="left:226.60000000000002px;top:69px;width:160px;text-align:center;letter-spacing:-0.12px">analog-in-01</span>
<span class="t tk" style="left:226.8px;top:89px;width:160px;text-align:center;letter-spacing:0.37px">0.8602</span>
<div class="a" style="left:231px;top:106px;width:151px;height:30px;background:#bfbfbf;border:1px solid #000"><div class="a" style="left:0;top:0;width:25px;height:28px;background:#00ff00;border-right:1px solid #000"></div></div>
<span class="t tk" style="left:256.0px;top:114px;width:100px;text-align:center;letter-spacing:0.37px">0.9</span>
<span class="t tk" style="left:227px;top:139px;">0</span>
<span class="t tk" style="left:377.5px;top:139px;">5</span>
<span class="t hb" style="left:226.60000000000002px;top:160px;width:160px;text-align:center;letter-spacing:-0.12px">analog-out-05</span>
<span class="t tk" style="left:263px;top:182px;letter-spacing:0.37px">0.0</span>
<div class="a" style="left:257px;top:198px;width:100px;height:17px;background:#b3b3b3;border:1px solid;border-color:#828282 #fff #fff #828282"><div class="a" style="left:0;top:0;width:30px;height:15px;background:#d9d9d9;border:1px solid;border-color:#fff #828282 #828282 #fff;box-shadow:inset -1px -1px 0 #9a9a9a,inset 1px 1px 0 #fff"><div class="a" style="left:13px;top:0;width:2px;height:12px;border-left:1px solid #828282;border-right:1px solid #fff"></div></div></div>
<span class="t hb" style="left:428.6px;top:27px;width:160px;text-align:center;letter-spacing:-0.12px">digital-in-13</span>
<svg class="a" style="left:498px;top:44px" width="22" height="22" viewBox="0 0 22 22"><circle cx="11" cy="11" r="9.5" fill="#00ff00" stroke="#000" stroke-width="1"/></svg>
<span class="t hb" style="left:428.6px;top:69px;width:160px;text-align:center;letter-spacing:-0.12px">analog-in-02</span>
<span class="t tk" style="left:428.79999999999995px;top:89px;width:160px;text-align:center;letter-spacing:0.37px">1.3392</span>
<div class="a" style="left:433px;top:106px;width:151px;height:30px;background:#bfbfbf;border:1px solid #000"><div class="a" style="left:0;top:0;width:40px;height:28px;background:#00ff00;border-right:1px solid #000"></div></div>
<span class="t tk" style="left:458.0px;top:114px;width:100px;text-align:center;letter-spacing:0.37px">1.3</span>
<span class="t tk" style="left:429px;top:139px;">0</span>
<span class="t tk" style="left:579.5px;top:139px;">5</span>
<span class="t hb" style="left:428.6px;top:160px;width:160px;text-align:center;letter-spacing:-0.12px">analog-out-06</span>
<span class="t tk" style="left:465px;top:182px;letter-spacing:0.37px">0.0</span>
<div class="a" style="left:459px;top:198px;width:100px;height:17px;background:#b3b3b3;border:1px solid;border-color:#828282 #fff #fff #828282"><div class="a" style="left:0;top:0;width:30px;height:15px;background:#d9d9d9;border:1px solid;border-color:#fff #828282 #828282 #fff;box-shadow:inset -1px -1px 0 #9a9a9a,inset 1px 1px 0 #fff"><div class="a" style="left:13px;top:0;width:2px;height:12px;border-left:1px solid #828282;border-right:1px solid #fff"></div></div></div>
<span class="t hb" style="left:630.6px;top:27px;width:160px;text-align:center;letter-spacing:-0.12px">digital-out-02</span>
<div class="a" style="left:706px;top:49px;width:11px;height:11px;background:#fff;border:1px solid;border-color:#828282 #fff #fff #828282"></div>
<span class="t hb" style="left:630.6px;top:69px;width:160px;text-align:center;letter-spacing:-0.12px">analog-in-03</span>
<span class="t tk" style="left:630.8px;top:89px;width:160px;text-align:center;letter-spacing:0.37px">1.0166</span>
<div class="a" style="left:635px;top:106px;width:151px;height:30px;background:#bfbfbf;border:1px solid #000"><div class="a" style="left:0;top:0;width:30px;height:28px;background:#00ff00;border-right:1px solid #000"></div></div>
<span class="t tk" style="left:660.0px;top:114px;width:100px;text-align:center;letter-spacing:0.37px">1.0</span>
<span class="t tk" style="left:631px;top:139px;">0</span>
<span class="t tk" style="left:781.5px;top:139px;">5</span>
<span class="t hb" style="left:630.6px;top:160px;width:160px;text-align:center;letter-spacing:-0.12px">analog-out-09</span>
<span class="t tk" style="left:667px;top:182px;letter-spacing:0.37px">0.0</span>
<div class="a" style="left:661px;top:198px;width:100px;height:17px;background:#b3b3b3;border:1px solid;border-color:#828282 #fff #fff #828282"><div class="a" style="left:0;top:0;width:30px;height:15px;background:#d9d9d9;border:1px solid;border-color:#fff #828282 #828282 #fff;box-shadow:inset -1px -1px 0 #9a9a9a,inset 1px 1px 0 #fff"><div class="a" style="left:13px;top:0;width:2px;height:12px;border-left:1px solid #828282;border-right:1px solid #fff"></div></div></div>
<span class="t hb" style="left:832.6px;top:27px;width:160px;text-align:center;letter-spacing:-0.12px">digital-out-04</span>
<div class="a" style="left:908px;top:49px;width:11px;height:11px;background:#fff;border:1px solid;border-color:#828282 #fff #fff #828282"></div>
<span class="t hb" style="left:832.6px;top:69px;width:160px;text-align:center;letter-spacing:-0.12px">analog-in-04</span>
<span class="t tk" style="left:832.8px;top:89px;width:160px;text-align:center;letter-spacing:0.37px">0.7185</span>
<div class="a" style="left:837px;top:106px;width:151px;height:30px;background:#bfbfbf;border:1px solid #000"><div class="a" style="left:0;top:0;width:21px;height:28px;background:#00ff00;border-right:1px solid #000"></div></div>
<span class="t tk" style="left:862.0px;top:114px;width:100px;text-align:center;letter-spacing:0.37px">0.7</span>
<span class="t tk" style="left:833px;top:139px;">0</span>
<span class="t tk" style="left:983.5px;top:139px;">5</span>
<span class="t hb" style="left:832.6px;top:160px;width:160px;text-align:center;letter-spacing:-0.12px">analog-out-10</span>
<span class="t tk" style="left:869px;top:182px;letter-spacing:0.37px">0.0</span>
<div class="a" style="left:863px;top:198px;width:100px;height:17px;background:#b3b3b3;border:1px solid;border-color:#828282 #fff #fff #828282"><div class="a" style="left:0;top:0;width:30px;height:15px;background:#d9d9d9;border:1px solid;border-color:#fff #828282 #828282 #fff;box-shadow:inset -1px -1px 0 #9a9a9a,inset 1px 1px 0 #fff"><div class="a" style="left:13px;top:0;width:2px;height:12px;border-left:1px solid #828282;border-right:1px solid #fff"></div></div></div>
<span class="t hb" style="left:1034.6px;top:27px;width:160px;text-align:center;letter-spacing:-0.12px">digital-out-07</span>
<div class="a" style="left:1110px;top:49px;width:11px;height:11px;background:#fff;border:1px solid;border-color:#828282 #fff #fff #828282"></div>
<span class="t hb" style="left:1034.6px;top:69px;width:160px;text-align:center;letter-spacing:-0.12px">analog-in-05</span>
<span class="t tk" style="left:1034.8px;top:89px;width:160px;text-align:center;letter-spacing:0.37px">0.5767</span>
<div class="a" style="left:1039px;top:106px;width:151px;height:30px;background:#bfbfbf;border:1px solid #000"><div class="a" style="left:0;top:0;width:17px;height:28px;background:#00ff00;border-right:1px solid #000"></div></div>
<span class="t tk" style="left:1064.0px;top:114px;width:100px;text-align:center;letter-spacing:0.37px">0.6</span>
<span class="t tk" style="left:1035px;top:139px;">0</span>
<span class="t tk" style="left:1185.5px;top:139px;">5</span>
<span class="t hb" style="left:1034.6px;top:160px;width:160px;text-align:center;letter-spacing:-0.12px">analog-out-11</span>
<span class="t tk" style="left:1071px;top:182px;letter-spacing:0.37px">0.0</span>
<div class="a" style="left:1065px;top:198px;width:100px;height:17px;background:#b3b3b3;border:1px solid;border-color:#828282 #fff #fff #828282"><div class="a" style="left:0;top:0;width:30px;height:15px;background:#d9d9d9;border:1px solid;border-color:#fff #828282 #828282 #fff;box-shadow:inset -1px -1px 0 #9a9a9a,inset 1px 1px 0 #fff"><div class="a" style="left:13px;top:0;width:2px;height:12px;border-left:1px solid #828282;border-right:1px solid #fff"></div></div></div>
</div>
<div class="a" style="left:0px;top:0px;width:1280px;height:25px;background:linear-gradient(180deg,#f0efed,#ebe9e7);border-bottom:1px solid #c4c1bf"></div>
<svg class="a" style="left:9px;top:2px" width="21" height="20" viewBox="0 0 21 20"><circle cx="11.1" cy="9.9" r="5.25" fill="none" stroke="#141414" stroke-width="4.1"/><path d="M13.50 9.90 L19.30 9.90" stroke="#edecea" stroke-width="1.3"/><path d="M9.90 11.98 L7.00 17.00" stroke="#edecea" stroke-width="1.3"/><path d="M9.90 7.82 L7.00 2.80" stroke="#edecea" stroke-width="1.3"/><circle cx="2.40" cy="9.90" r="2.7" fill="#edecea"/><circle cx="15.45" cy="17.43" r="2.7" fill="#edecea"/><circle cx="15.45" cy="2.37" r="2.7" fill="#edecea"/><circle cx="2.40" cy="9.90" r="1.55" fill="#141414"/><circle cx="15.45" cy="17.43" r="1.55" fill="#141414"/><circle cx="15.45" cy="2.37" r="1.55" fill="#141414"/></svg>
<span class="t ui" style="left:36px;top:4px;letter-spacing:-0.18px">Applications</span>
<span class="t ui" style="left:130px;top:4px;letter-spacing:-0.15px">Places</span>
<span class="t ui" style="left:186px;top:4px;letter-spacing:-0.15px">System</span>
<svg class="a" style="left:242px;top:0px" width="24" height="24" viewBox="0 0 24 24"><defs><radialGradient id="fxg" cx="45%" cy="30%" r="75%"><stop offset="0" stop-color="#9fe0ff"/><stop offset="0.45" stop-color="#2e8fe0"/><stop offset="1" stop-color="#0b3c8c"/></radialGradient><linearGradient id="fxo" x1="0.1" y1="0" x2="0.9" y2="1"><stop offset="0" stop-color="#ff9a1a"/><stop offset="0.45" stop-color="#f0620e"/><stop offset="1" stop-color="#b92f08"/></linearGradient><linearGradient id="fxy" x1="0" y1="0" x2="0" y2="1"><stop offset="0" stop-color="#ffd21f"/><stop offset="1" stop-color="#f07a10"/></linearGradient></defs><circle cx="12" cy="12" r="11.2" fill="url(#fxo)"/><path d="M20.5 5 Q24.5 10.5 22.5 16.5 Q21 20 18.5 21.5 Q21.5 16 20 10.5 Z" fill="url(#fxy)"/><circle cx="13" cy="9.3" r="7.6" fill="url(#fxg)"/><path d="M1.2 9.5 Q2 5 5 3 Q5.5 5.5 7.5 6.5 Q10 5 13 6.8 Q10.3 7.8 10 10 Q11.3 12 14.5 11.5 Q12.5 15 8.8 13.8 Q10 16.6 13.5 16.8 Q9 19 5 16.5 Q1.5 14 1.2 9.5 Z" fill="url(#fxo)"/></svg>
<svg class="a" style="left:267px;top:1px" width="23" height="23" viewBox="0 0 23 23"><defs><linearGradient id="hg" x1="0" y1="0" x2="0" y2="1"><stop offset="0" stop-color="#6ea3d6"/><stop offset="1" stop-color="#2d68a6"/></linearGradient></defs><circle cx="11.5" cy="11.5" r="10.8" fill="url(#hg)" stroke="#2a5f98" stroke-width="0.8"/><text x="11.5" y="17.3" text-anchor="middle" font-family="DejaVu Sans,sans-serif" font-size="16" fill="#fff">?</text></svg>
<svg class="a" style="left:368px;top:0px" width="24" height="24" viewBox="0 0 24 24"><ellipse cx="12" cy="13" rx="6.5" ry="9" fill="#3a3a3a"/><ellipse cx="12.5" cy="5.5" rx="4.5" ry="4.5" fill="#4a4a4a"/><ellipse cx="11.5" cy="15" rx="3.6" ry="6" fill="#f4f4f4"/><path d="M14 3 L19 2 L17 7 Z" fill="#8a8a8a"/><path d="M9 6.5 L14 6 L12 9 Z" fill="#f5b400"/><ellipse cx="6" cy="20.5" rx="5" ry="2.8" fill="#ffbf10"/><ellipse cx="17.5" cy="20.5" rx="5" ry="3" fill="#ffb000"/><path d="M17 11 Q20 14 18 18" stroke="#8a8a8a" stroke-width="2" fill="none"/></svg>
<svg class="a" style="left:559px;top:0px" width="24" height="24" viewBox="0 0 24 24"><ellipse cx="12" cy="13" rx="6.5" ry="9" fill="#3a3a3a"/><ellipse cx="12.5" cy="5.5" rx="4.5" ry="4.5" fill="#4a4a4a"/><ellipse cx="11.5" cy="15" rx="3.6" ry="6" fill="#f4f4f4"/><path d="M14 3 L19 2 L17 7 Z" fill="#8a8a8a"/><path d="M9 6.5 L14 6 L12 9 Z" fill="#f5b400"/><ellipse cx="6" cy="20.5" rx="5" ry="2.8" fill="#ffbf10"/><ellipse cx="17.5" cy="20.5" rx="5" ry="3" fill="#ffb000"/><path d="M17 11 Q20 14 18 18" stroke="#8a8a8a" stroke-width="2" fill="none"/></svg>
<svg class="a" style="left:433px;top:1px" width="20" height="23" viewBox="0 0 20 23"><rect x="0.5" y="0.5" width="18" height="22" rx="2" fill="#8e9293" stroke="#5c5f60"/><rect x="3" y="3" width="13" height="5" fill="#cfd3cf" stroke="#6f7273" stroke-width="0.6"/><rect x="3.0" y="10" width="2.5" height="2" fill="#555"/><rect x="3.0" y="13" width="2.5" height="2" fill="#555"/><rect x="3.0" y="16" width="2.5" height="2" fill="#555"/><rect x="3.0" y="19" width="2.5" height="2" fill="#555"/><rect x="6.5" y="10" width="2.5" height="2" fill="#555"/><rect x="6.5" y="13" width="2.5" height="2" fill="#555"/><rect x="6.5" y="16" width="2.5" height="2" fill="#555"/><rect x="6.5" y="19" width="2.5" height="2" fill="#555"/><rect x="10.0" y="10" width="2.5" height="2" fill="#555"/><rect x="10.0" y="13" width="2.5" height="2" fill="#555"/><rect x="10.0" y="16" width="2.5" height="2" fill="#555"/><rect x="10.0" y="19" width="2.5" height="2" fill="#555"/><rect x="13.5" y="10" width="2.5" height="2" fill="#3d6d82"/><rect x="13.5" y="13" width="2.5" height="2" fill="#3d6d82"/><rect x="13.5" y="16" width="2.5" height="2" fill="#3d6d82"/><rect x="13.5" y="19" width="2.5" height="2" fill="#3d6d82"/></svg>
<svg class="a" style="left:491px;top:0px" width="26" height="24" viewBox="0 0 26 24"><rect x="2.5" y="0.5" width="17" height="22" fill="#fdfdfd" stroke="#9a9a9a"/><path d="M5 4 H16 M5 6.5 H16 M5 9 H16 M5 11.5 H16 M5 14 H13 M5 16.5 H11" stroke="#b0b0b0" stroke-width="1"/><path d="M10 19.5 L11 16 L20 7 L23 10 L14 18.5 Z" fill="#222"/><path d="M20 7 L21.5 5.5 Q23 5 24 6.5 L23 10 Z" fill="#e58ad0"/><path d="M10 19.5 L11 16 L13 18 Z" fill="#e6c36a"/></svg>
<div class="a" style="left:885px;top:4px;width:5px;height:17px;background-image:radial-gradient(circle,#b8b6b3 0.7px,transparent 1px);background-size:3px 3px"></div>
<span class="t ui" style="left:893px;top:4px;font-family:DejaVu Sans Condensed,DejaVu Sans,sans-serif;font-stretch:condensed;font-size:12px;letter-spacing:-0.6px;color:#333">USA</span>
<svg class="a" style="left:919px;top:3px" width="20" height="19" viewBox="0 0 20 19"><path d="M6.5 1 L12 7.5 H8.5 V14 H4.5 V7.5 H1 Z" fill="#3c3b37"/><path d="M13.5 18 L8 11.5 H11.5 V6 H15.5 V11.5 H19 Z" fill="#3c3b37"/></svg>
<svg class="a" style="left:948px;top:6px" width="23" height="13" viewBox="0 0 23 13"><path d="M0.5 4.5 H3 L7 1 V12 L3 8.5 H0.5 Z" fill="#3c3b37"/><path d="M9.5 6.5 H12 M14 6.5 H16.5 M18.5 6.5 H21" stroke="#3c3b37" stroke-width="1.2"/></svg>
<svg class="a" style="left:985px;top:6px" width="20" height="13" viewBox="0 0 20 13"><rect x="0.5" y="0.5" width="19" height="12" rx="1.5" fill="#3c3b37"/><path d="M2 2 L10 8.5 L18 2 M2.5 11.5 L7.5 6.5 M17.5 11.5 L12.5 6.5" stroke="#edecea" stroke-width="1" fill="none"/></svg>
<span class="t ui" style="left:1017px;top:4px;letter-spacing:-0.32px">Thu Nov 15,  7:42 AM</span>
<svg class="a" style="left:1169px;top:4px" width="20" height="17" viewBox="0 0 20 17"><circle cx="8.5" cy="8.5" r="8" fill="#3c3b37"/><path d="M12 14 L18 16 L14.5 11 Z" fill="#3c3b37"/><path d="M5.8 5.8 L11.2 11.2 M11.2 5.8 L5.8 11.2" stroke="#edecea" stroke-width="2" stroke-linecap="round"/></svg>
<span class="t ui" style="left:1192px;top:4px;letter-spacing:-0.4px">ubuntu</span>
<svg class="a" style="left:1253px;top:3px" width="18" height="18" viewBox="0 0 18 18"><path d="M5.2 4.3 A6.4 6.4 0 1 0 12.8 4.3" fill="none" stroke="#3c3b37" stroke-width="1.8" stroke-linecap="round"/><path d="M9 1.5 V9" stroke="#3c3b37" stroke-width="1.8" stroke-linecap="round"/></svg>
<div class="a" style="left:0px;top:999px;width:1280px;height:25px;background:linear-gradient(180deg,#f1f0ee,#eae8e6);border-top:1px solid #fbfbfa;box-shadow:0 -1px 3px rgba(0,0,0,.28)"></div>
<div class="a" style="left:0px;top:998px;width:665px;height:1px;background:#55504f"></div>
<div class="a" style="left:2px;top:1001px;width:21px;height:21px;border:1px solid #b9b6b2;border-radius:3px;background:linear-gradient(180deg,#f7f6f5,#e5e3e0)"><svg class="a" style="left:1px;top:3px" width="17" height="15" viewBox="0 0 17 15"><defs><linearGradient id="sdg" x1="0" y1="0" x2="0" y2="1"><stop offset="0" stop-color="#c455c6"/><stop offset="1" stop-color="#8e2a93"/></linearGradient></defs><rect x="0.5" y="0.5" width="16" height="14" rx="1.5" fill="url(#sdg)" stroke="#7a2a7d"/><rect x="0.5" y="0.5" width="16" height="3.5" rx="1" fill="#dfe0c0" stroke="#73793f"/><rect x="2.5" y="6" width="3" height="2" fill="#e9c9ea"/><rect x="2.5" y="10" width="3" height="2" fill="#e9c9ea"/></svg></div>
<div class="a" style="left:27px;top:1003px;width:5px;height:18px;background-image:radial-gradient(circle,#b8b6b3 0.7px,transparent 1px);background-size:3px 3px"></div>
<div class="a" style="left:35px;top:1001px;width:199px;height:22px;border:1px solid #a8a5a1;border-radius:4px;background:linear-gradient(180deg,#fdfdfc,#f0efed 50%,#e6e4e1)"><div class="a" style="left:0px;top:0"><svg class="a" style="left:6px;top:3px" width="16" height="14" viewBox="0 0 16 14"><rect x="0.5" y="0.5" width="15" height="13" rx="2" fill="#d6d4d4" stroke="#7e7a7d"/><rect x="1.8" y="1.8" width="12.4" height="10.4" rx="0.5" fill="#17171a"/><path d="M3.3 3.8 L7 6 L3.3 8.2" stroke="#c4c4c4" stroke-width="1" fill="none"/><rect x="7" y="9" width="5" height="1.3" fill="#e8e8e8"/></svg></div><span class="t ui" style="left:30px;top:3px;letter-spacing:-0.39px">ubuntu@ubuntu: ~</span></div>
<div class="a" style="left:236px;top:1001px;width:199px;height:22px;border:1px solid #a8a5a1;border-radius:4px;background:linear-gradient(180deg,#fdfdfc,#f0efed 50%,#e6e4e1)"><div class="a" style="left:0px;top:0"><svg class="a" style="left:6px;top:3px" width="16" height="14" viewBox="0 0 16 14"><rect x="0.5" y="0.5" width="15" height="13" rx="2" fill="#d6d4d4" stroke="#7e7a7d"/><rect x="1.8" y="1.8" width="12.4" height="10.4" rx="0.5" fill="#17171a"/><path d="M3.3 3.8 L7 6 L3.3 8.2" stroke="#c4c4c4" stroke-width="1" fill="none"/><rect x="7" y="9" width="5" height="1.3" fill="#e8e8e8"/></svg></div><span class="t ui" style="left:30px;top:3px;letter-spacing:-0.28px">ubuntu@ubuntu: ~/lin...</span></div>
<div class="a" style="left:437px;top:1001px;width:199px;height:22px;border:1px solid #a8a5a1;border-radius:4px;background:linear-gradient(180deg,#fdfdfc,#f0efed 50%,#e6e4e1)"><div class="a" style="left:0px;top:0"><svg class="a" style="left:6px;top:2px" width="18" height="18" viewBox="0 0 18 18"><path d="M5.5 2.5 L13.5 10.5 M13.5 2.5 L5.5 10.5" stroke="#111" stroke-width="1.1" fill="none"/><path d="M2.5 2.5 V10.5 M1 2.5 H4 M1 10.5 H4" stroke="#111" stroke-width="1.3" fill="none"/><path d="M5.5 13.5 H13.5 M5.5 12 V15 M13.5 12 V15" stroke="#111" stroke-width="1.2" fill="none"/></svg></div><span class="t ui" style="left:30px;top:3px;letter-spacing:-0.08px">axis.ngc</span></div>
<div class="a" style="left:638px;top:1001px;width:200px;height:22px;border:1px solid #8f8c88;border-radius:4px;background:linear-gradient(180deg,#cdcac6,#dad8d4 30%,#d6d3cf);box-shadow:inset 0 1px 2px rgba(0,0,0,.25)"><div class="a" style="left:1px;top:0"><svg class="a" style="left:7px;top:4px" width="15" height="13" viewBox="0 0 15 13"><rect x="0.5" y="0.5" width="14" height="12" fill="#f4f4f4" stroke="#3b5a8c"/><rect x="1" y="1" width="13" height="2.5" fill="#5d8fd0"/></svg></div><span class="t ui" style="left:31px;top:3px;letter-spacing:-0.1px">arduino-vcp</span></div>
<div class="a" style="left:1151px;top:1001px;width:102px;height:22px;background:#aaa7a3;border-radius:3px;overflow:hidden"><svg class="a" style="left:0;top:0" width="102" height="22" viewBox="0 0 102 22"><rect x="0" y="0" width="25.5" height="22" fill="#4f7db8"/><rect x="1" y="1" width="5.5" height="5" fill="#86aadb" stroke="#fff" stroke-width="1"/><rect x="7.5" y="1" width="17.5" height="5" fill="#86aadb" stroke="#fff" stroke-width="1"/><rect x="0.5" y="6.5" width="24.5" height="3.5" fill="#dfe9f6" stroke="#fff" stroke-width="1"/><rect x="7.5" y="10.5" width="17.5" height="2.5" fill="#86aadb" stroke="#fff" stroke-width="1"/><rect x="1" y="12" width="12" height="9" fill="#8fb2e1" stroke="#fff" stroke-width="1.2"/><path d="M26 0 V22 M51 0 V22 M76.5 0 V22" stroke="#d2cfcb" stroke-width="1.2"/></svg></div>
<svg class="a" style="left:1257px;top:1000px" width="22" height="24" viewBox="0 0 22 24"><defs><linearGradient id="trg" x1="0" x2="1"><stop offset="0" stop-color="#b9bbb8"/><stop offset="0.5" stop-color="#f0f1ef"/><stop offset="1" stop-color="#a9aba8"/></linearGradient></defs><path d="M2.5 5 L4.5 22 Q10.5 24 16.5 22 L18.5 5 Z" fill="url(#trg)" stroke="#6f716e" stroke-width="1"/><ellipse cx="10.5" cy="4.5" rx="8.5" ry="2.8" fill="#e3e4e2" stroke="#6f716e"/><path d="M6 8 L7 20 M9 8.5 L9.5 20.5 M12 8.5 L11.5 20.5 M15 8 L14 20" stroke="#9a9c99" stroke-width="0.8"/><path d="M5 12 L8 10 L11 13 L14 11 L16 14 L13 17 L9 15 L6 18" stroke="#fff" stroke-width="1" fill="none" opacity=".8"/></svg>
<svg class="a" style="left:702px;top:527px" width="18" height="26" viewBox="0 0 18 26"><path d="M2.3 2.2 L2.3 20.5 L5.8 17.2 L8.5 22.3 L11 21 L8.5 15 L13.8 14.6 Z" fill="#fff" stroke="#000" stroke-width="1.5" stroke-linejoin="round"/></svg>
</body>
</html>
